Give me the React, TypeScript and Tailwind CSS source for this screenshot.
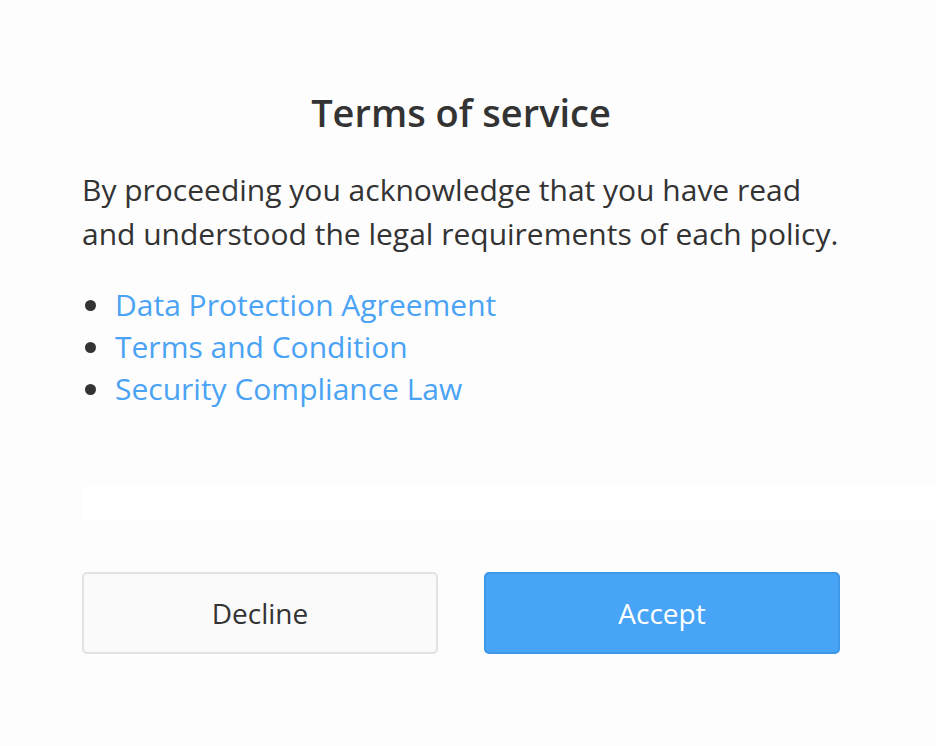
export default function App() {
  const links = ["Data Protection Agreement", "Terms and Condition", "Security Compliance Law"];
  return (
    <div
      className="w-[936px] h-[746px] bg-[#fdfdfd] flex flex-col text-[#333333]"
      style={{ fontFamily: '"Open Sans", "Noto Sans", sans-serif' }}
    >
      <div className="px-[82px] flex flex-col">
        <h1 className="pt-[88px] pr-[14px] text-center text-[38px] leading-[48px] font-semibold text-[#333333]">
          Terms of service
        </h1>
        <p className="mt-[32px] text-[30px] leading-[44px] text-[#333333]">
          By proceeding you acknowledge that you have read and understood the legal requirements of each policy.
        </p>
        <ul className="mt-[28px] flex flex-col">
          {links.map((l) => (
            <li key={l} className="flex items-center h-[42px]">
              <span className="ml-[3px] w-[11px] h-[11px] rounded-full bg-[#333333]" />
              <a className="ml-[19px] text-[30px] leading-[42px] text-[#4aa3f4]">{l}</a>
            </li>
          ))}
        </ul>
      </div>
      <div className="mt-[76px] ml-[82px] h-[34px] bg-white" />
      <div className="mt-[52px] px-[82px] flex gap-[46px]">
        <button className="w-[356px] h-[82px] rounded-[5px] border-2 border-[#e2e2e2] bg-[#fafafa] text-[28px] text-[#333333]">
          Decline
        </button>
        <button className="w-[356px] h-[82px] rounded-[5px] border-2 border-[#3f97e8] bg-[#48a4f6] text-[28px] text-white">
          Accept
        </button>
      </div>
    </div>
  );
}
